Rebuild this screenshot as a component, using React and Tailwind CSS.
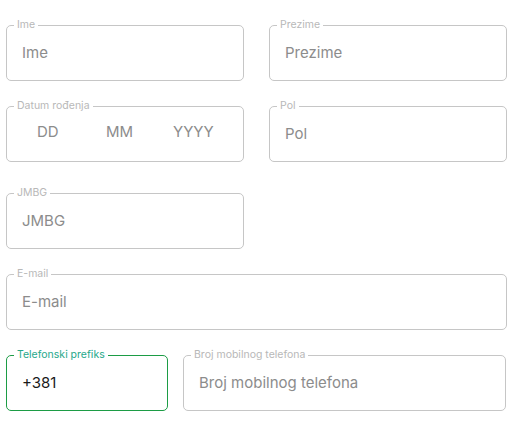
import React from "react";

function Field({ label, w, children, focused, className = "" }) {
  return (
    <div
      className={`relative h-[56px] rounded-[5px] border ${
        focused ? "border-[#1c9c45]" : "border-[#c6c6c6]"
      } ${w} ${className} flex items-center`}
    >
      <span
        className={`absolute left-[7px] top-[-7px] bg-white px-[3px] text-[10.5px] leading-[12px] ${
          focused ? "text-[#26a88a]" : "text-[#b8b8b8]"
        }`}
      >
        {label}
      </span>
      {children}
    </div>
  );
}

export default function App() {
  return (
    <div
      className="w-[518px] h-[421px] bg-white pl-[6px] pt-[25px]"
      style={{ fontFamily: "Inter, 'Noto Sans', sans-serif" }}
    >
      <div className="flex gap-[25px]">
        <Field label="Ime" w="w-[238px]">
          <span className="pl-[15px] text-[15px] text-[#8c8c8c]">Ime</span>
        </Field>
        <Field label="Prezime" w="w-[238px]">
          <span className="pl-[15px] text-[15px] text-[#8c8c8c]">Prezime</span>
        </Field>
      </div>
      <div className="flex gap-[25px] mt-[25px]">
        <Field label="Datum rođenja" w="w-[238px]">
          <div className="flex text-[15px] text-[#8c8c8c] pb-[4px]">
            <span className="ml-[30px] w-[69px]">DD</span>
            <span className="w-[67px]">MM</span>
            <span>YYYY</span>
          </div>
        </Field>
        <Field label="Pol" w="w-[238px]">
          <span className="pl-[15px] text-[15px] text-[#8c8c8c]">Pol</span>
        </Field>
      </div>
      <div className="mt-[31px]">
        <Field label="JMBG" w="w-[238px]" className="h-[56px]">
          <span className="pl-[15px] text-[15px] text-[#8c8c8c]">JMBG</span>
        </Field>
      </div>
      <div className="mt-[25px]">
        <Field label="E-mail" w="w-[501px]">
          <span className="pl-[15px] text-[15px] text-[#8c8c8c]">E-mail</span>
        </Field>
      </div>
      <div className="flex gap-[15px] mt-[25px]">
        <Field label="Telefonski prefiks" w="w-[162px]" focused>
          <span className="pl-[15px] text-[15px] text-[#1a1a1a]">+381</span>
        </Field>
        <Field label="Broj mobilnog telefona" w="w-[323px]">
          <span className="pl-[15px] text-[15px] text-[#8c8c8c]">
            Broj mobilnog telefona
          </span>
        </Field>
      </div>
    </div>
  );
}
